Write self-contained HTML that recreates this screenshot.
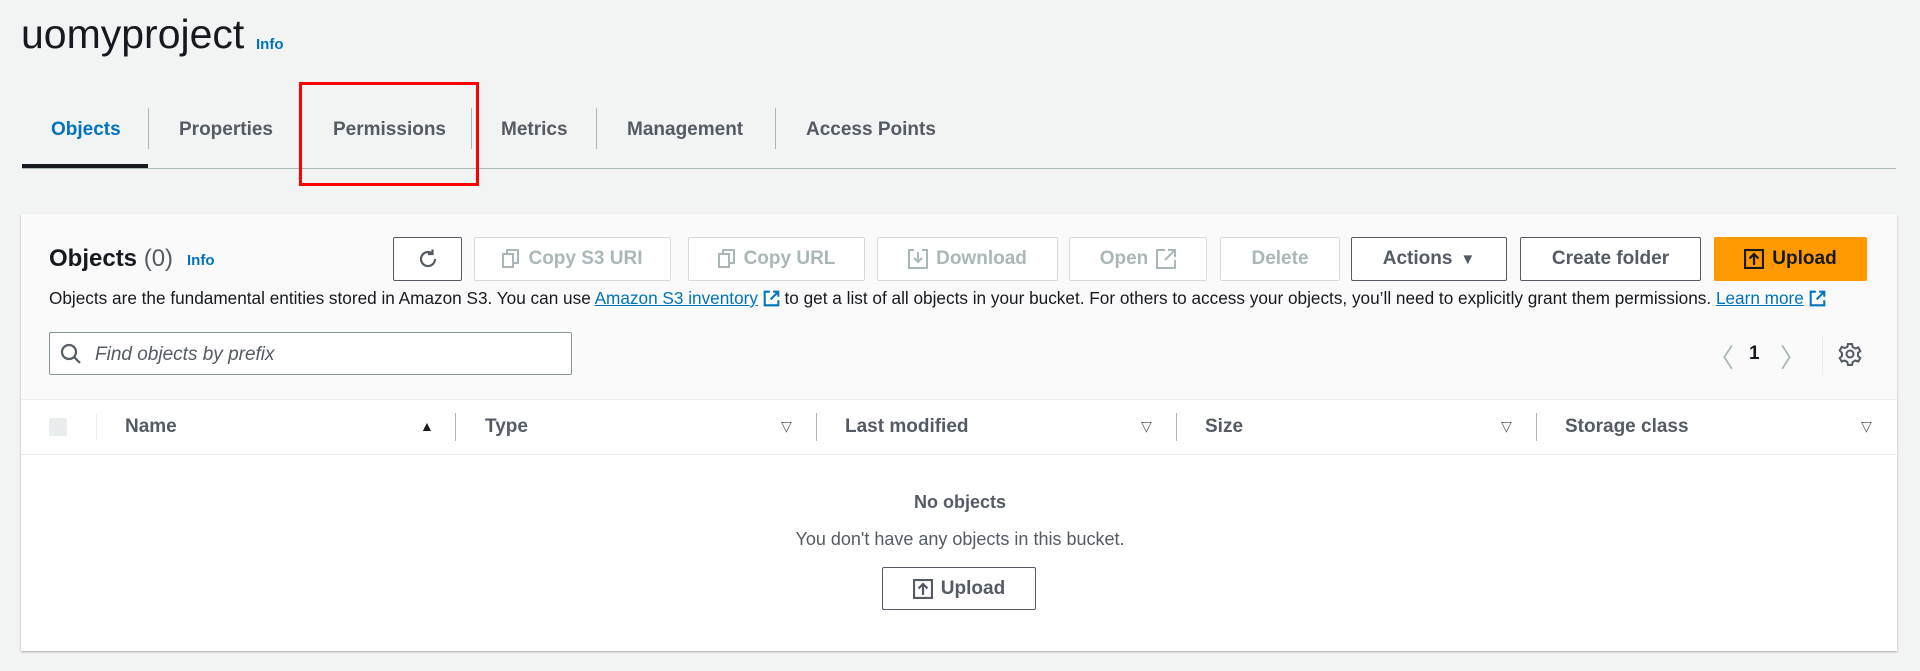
<!DOCTYPE html>
<html><head><meta charset="utf-8"><style>
*{box-sizing:border-box;margin:0;padding:0}
body{width:1920px;height:671px;background:#f2f3f3;font-family:"Liberation Sans",sans-serif;color:#16191f;position:relative;overflow:hidden}
.a{position:absolute;white-space:nowrap}
.info{color:#0073bb;font-weight:bold;font-size:15px}
.tab{font-size:19px;font-weight:bold;color:#545b64;top:119px}
.sep{position:absolute;width:1px;background:#aab7b8}
.btn{position:absolute;top:237px;height:44px;border:1px solid #d5dbdb;border-radius:2px;background:#fff;font-size:19px;font-weight:bold;color:#aab7b8;display:flex;align-items:center;justify-content:center;gap:8px}
.btn.on{border-color:#545b64;color:#545b64}
.col{position:absolute;top:416px;font-size:19px;font-weight:bold;color:#545b64}
.arr{position:absolute;top:418px;font-size:14px;color:#545b64}
a{color:#0073bb;text-decoration:underline}
.ext{display:inline-block;vertical-align:-3px}
</style></head><body>
<div class="a" style="left:21px;top:11px;font-size:41px;color:#16191f">uomyproject</div>
<div class="a info" style="left:256px;top:36px">Info</div>

<div class="a tab" style="left:51px;color:#0073bb">Objects</div>
<div class="a tab" style="left:179px">Properties</div>
<div class="a tab" style="left:333px">Permissions</div>
<div class="a tab" style="left:501px">Metrics</div>
<div class="a tab" style="left:627px">Management</div>
<div class="a tab" style="left:806px">Access Points</div>
<div class="sep" style="left:148px;top:108px;height:41px"></div>
<div class="sep" style="left:300px;top:108px;height:41px"></div>
<div class="sep" style="left:471px;top:108px;height:41px"></div>
<div class="sep" style="left:596px;top:108px;height:41px"></div>
<div class="sep" style="left:775px;top:108px;height:41px"></div>
<div class="a" style="left:22px;top:168px;width:1874px;height:1px;background:#aab7b8"></div>
<div class="a" style="left:22px;top:164px;width:126px;height:4px;background:#16191f"></div>
<div class="a" style="left:299px;top:82px;width:180px;height:104px;border:3px solid #f00"></div>

<div class="a" style="left:21px;top:214px;width:1876px;height:437px;background:#fff;box-shadow:0 1px 2px rgba(0,0,0,.3)"></div>
<div class="a" style="left:21px;top:214px;width:1876px;height:185px;background:#fafafa"></div>
<div class="a" style="left:49px;top:245px;font-size:24px;font-weight:bold">Objects <span style="font-weight:normal;color:#545b64">(0)</span></div>
<div class="a info" style="left:187px;top:252px">Info</div>

<div class="btn on" style="left:393px;width:69px"><svg width="24" height="24" viewBox="0 0 24 24" fill="none" stroke="#545b64" stroke-width="2.2"><path d="M19 12a7 7 0 1 1-3-5.7"/><path d="M16.5 2.5v4.5h-4.5"/></svg></div>
<div class="btn" style="left:474px;width:197px"><svg width="18" height="20" viewBox="0 0 18 20" fill="none" stroke="#aab7b8" stroke-width="2"><rect x="1" y="5" width="10" height="13"/><path d="M5 5V1h11v13h-5"/></svg>Copy S3 URI</div>
<div class="btn" style="left:688px;width:177px"><svg width="18" height="20" viewBox="0 0 18 20" fill="none" stroke="#aab7b8" stroke-width="2"><rect x="1" y="5" width="10" height="13"/><path d="M5 5V1h11v13h-5"/></svg>Copy URL</div>
<div class="btn" style="left:877px;width:181px"><svg width="20" height="20" viewBox="0 0 20 20" fill="none" stroke="#aab7b8" stroke-width="2"><path d="M6 1H1v18h18V1h-5M10 3v10M6 9l4 4 4-4"/></svg>Download</div>
<div class="btn" style="left:1069px;width:138px">Open <svg width="20" height="20" viewBox="0 0 20 20" fill="none" stroke="#aab7b8" stroke-width="2"><path d="M9 1H1v18h18v-8M12 1h7v7M19 1L9 11"/></svg></div>
<div class="btn" style="left:1220px;width:120px">Delete</div>
<div class="btn on" style="left:1351px;width:156px">Actions <span style="font-size:15px">▼</span></div>
<div class="btn on" style="left:1520px;width:181px">Create folder</div>
<div class="btn" style="left:1714px;width:153px;background:#ff9900;border-color:#ff9900;color:#16191f"><svg width="20" height="20" viewBox="0 0 20 20" fill="none" stroke="#16191f" stroke-width="2.2"><rect x="1" y="1" width="18" height="18"/><path d="M10 16V5M5.5 9.5L10 5l4.5 4.5"/></svg>Upload</div>

<div class="a" style="left:49px;top:288px;font-size:17.2px;color:#16191f">Objects are the fundamental entities stored in Amazon S3. You can use <a>Amazon S3 inventory</a> <svg class="ext" width="17" height="17" viewBox="0 0 20 20" fill="none" stroke="#0073bb" stroke-width="2.4"><path d="M8 2H2v16h16v-6M12 2h6v6M18 2L9 11"/></svg> to get a list of all objects in your bucket. For others to access your objects, you’ll need to explicitly grant them permissions. <a>Learn more</a> <svg class="ext" width="17" height="17" viewBox="0 0 20 20" fill="none" stroke="#0073bb" stroke-width="2.4"><path d="M8 2H2v16h16v-6M12 2h6v6M18 2L9 11"/></svg></div>

<div class="a" style="left:49px;top:332px;width:523px;height:43px;border:1px solid #879596;border-radius:2px;background:#fff"></div>
<svg class="a" style="left:60px;top:343px" width="22" height="22" viewBox="0 0 22 22" fill="none" stroke="#545b64" stroke-width="2.2"><circle cx="9" cy="9" r="7"/><path d="M14 14l6 6"/></svg>
<div class="a" style="left:95px;top:344px;font-size:19px;font-style:italic;color:#545b64">Find objects by prefix</div>

<div class="a" style="left:1708px;top:338px;font-size:26px;color:#aab7b8">〈</div>
<div class="a" style="left:1749px;top:343px;font-size:19px;font-weight:bold">1</div>
<div class="a" style="left:1780px;top:338px;font-size:26px;color:#aab7b8">〉</div>
<div class="sep" style="left:1822px;top:335px;height:40px;background:#eaeded"></div>
<svg class="a" style="left:1838px;top:342px" width="24" height="24" viewBox="0 0 24 24" fill="none" stroke="#545b64" stroke-width="2"><circle cx="12" cy="12" r="3.5"/><path d="M10 2h4l.7 3 2.6 1.5 3-1 2 3.5-2.3 2v3l2.3 2-2 3.5-3-1-2.6 1.5-.7 3h-4l-.7-3-2.6-1.5-3 1-2-3.5 2.3-2v-3L1.7 8.5l2-3.5 3 1L9.3 5z"/></svg>

<div class="a" style="left:21px;top:399px;width:1876px;height:1px;background:#eaeded"></div>
<div class="a" style="left:21px;top:454px;width:1876px;height:1px;background:#eaeded"></div>
<div class="a" style="left:49px;top:418px;width:18px;height:18px;background:#eaeded;border-radius:2px"></div>
<div class="sep" style="left:96px;top:414px;height:26px;background:#eaeded"></div>
<div class="col" style="left:125px">Name</div><div class="arr" style="left:420px;color:#16191f">▲</div>
<div class="sep" style="left:455px;top:413px;height:28px"></div>
<div class="col" style="left:485px">Type</div><div class="arr" style="left:781px">▽</div>
<div class="sep" style="left:816px;top:413px;height:28px"></div>
<div class="col" style="left:845px">Last modified</div><div class="arr" style="left:1141px">▽</div>
<div class="sep" style="left:1176px;top:413px;height:28px"></div>
<div class="col" style="left:1205px">Size</div><div class="arr" style="left:1501px">▽</div>
<div class="sep" style="left:1536px;top:413px;height:28px"></div>
<div class="col" style="left:1565px">Storage class</div><div class="arr" style="left:1861px">▽</div>

<div class="a" style="left:0;width:1920px;text-align:center;top:492px;font-size:18px;font-weight:bold;color:#545b64">No objects</div>
<div class="a" style="left:0;width:1920px;text-align:center;top:529px;font-size:18px;color:#545b64">You don't have any objects in this bucket.</div>
<div class="btn on" style="left:882px;top:567px;width:154px;height:43px;color:#545b64"><svg width="20" height="20" viewBox="0 0 20 20" fill="none" stroke="#545b64" stroke-width="2.2"><rect x="1" y="1" width="18" height="18"/><path d="M10 16V5M5.5 9.5L10 5l4.5 4.5"/></svg>Upload</div>
</body></html>
